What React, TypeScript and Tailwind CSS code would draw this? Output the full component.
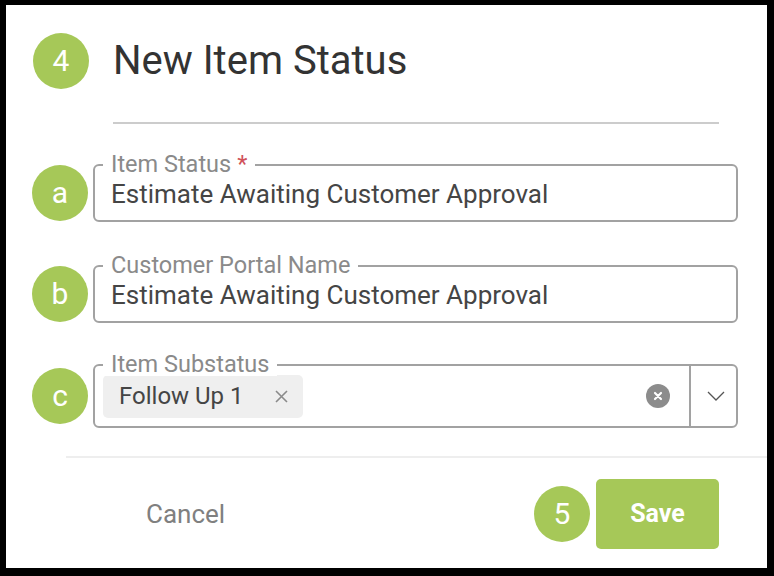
import React from 'react';

const GREEN = 'bg-[#a6c858]';

function Badge({ children }: { children: React.ReactNode }) {
  return (
    <div
      className={`w-14 h-14 shrink-0 rounded-full ${GREEN} flex items-center justify-center text-white text-[30px] leading-none`}
    >
      {children}
    </div>
  );
}

function TextField({ label, value, required }: { label: string; value: string; required?: boolean }) {
  return (
    <div className="relative flex-1 h-[58px] ml-[5px] border-2 border-[#a2a2a2] rounded-[6px] flex items-center pl-[16px]">
      <span className="absolute left-[8px] top-[-14px] bg-white px-[8px] text-[23.5px] leading-[24px] text-[#8a8a8a]">
        {label}
        {required && <span className="text-[#d0525a] ml-[6px]">*</span>}
      </span>
      <span className="text-[26px] text-[#454545] pt-[2px]">{value}</span>
    </div>
  );
}

export default function App() {
  return (
    <div className="w-[774px] h-[576px] bg-black pt-[5px] pl-[6px] pr-[7px] pb-[8px] font-['Roboto',sans-serif]">
      <div className="w-full h-full bg-white flex flex-col">
        {/* Header */}
        <div className="flex items-center pt-[28px] pl-[27px]">
          <Badge>4</Badge>
          <h2 className="ml-[24px] text-[40px] text-[#333] leading-none">New Item Status</h2>
        </div>
        <div className="mt-[33px] ml-[107px] w-[606px] h-[2px] bg-[#cccccc]" />

        {/* Fields */}
        <div className="flex items-center mt-[40px] pl-[26px] pr-[29px]">
          <Badge>a</Badge>
          <TextField label="Item Status" value="Estimate Awaiting Customer Approval" required />
        </div>
        <div className="flex items-center mt-[43px] pl-[26px] pr-[29px]">
          <Badge>b</Badge>
          <TextField label="Customer Portal Name" value="Estimate Awaiting Customer Approval" />
        </div>
        <div className="flex items-center mt-[41px] pl-[26px] pr-[29px]">
          <Badge>c</Badge>
          <div className="relative flex-1 h-[64px] ml-[5px] border-2 border-[#a2a2a2] rounded-[6px] flex items-center">
            <span className="absolute left-[8px] top-[-14px] bg-white px-[8px] text-[23.5px] leading-[24px] text-[#8a8a8a]">
              Item Substatus
            </span>
            <div className="ml-[8px] h-[43px] rounded-[5px] bg-[#efefef] flex items-center pl-[16px] pr-[15px]">
              <span className="text-[24px] text-[#454545]">Follow Up 1</span>
              <svg className="ml-[31px]" width="13" height="13" viewBox="0 0 13 13">
                <path d="M1 1L12 12M12 1L1 12" stroke="#8a8a8a" strokeWidth="1.6" />
              </svg>
            </div>
            <div className="flex-1" />
            <div className="w-6 h-6 rounded-full bg-[#8c8c8c] flex items-center justify-center mr-[19px]">
              <svg width="10" height="10" viewBox="0 0 10 10">
                <path d="M2 2L8 8M8 2L2 8" stroke="white" strokeWidth="2.2" strokeLinecap="round" />
              </svg>
            </div>
            <div className="w-[2px] self-stretch bg-[#a2a2a2]" />
            <div className="w-[45px] flex items-center justify-center pl-[4px]">
              <svg width="18" height="10" viewBox="0 0 18 10">
                <path d="M1 1L9 9L17 1" stroke="#555" strokeWidth="1.3" fill="none" />
              </svg>
            </div>
          </div>
        </div>

        {/* Footer */}
        <div className="mt-[28px] ml-[60px] h-[2px] bg-[#eeeeee]" />
        <div className="flex items-center mt-[21px] pl-[140px] pr-[48px]">
          <button className="text-[26px] text-[#808080]">Cancel</button>
          <div className="flex-1" />
          <Badge>5</Badge>
          <button className={`ml-[6px] w-[123px] h-[70px] rounded-[5px] ${GREEN} text-white text-[25px] font-bold`}>
            Save
          </button>
        </div>
      </div>
    </div>
  );
}
